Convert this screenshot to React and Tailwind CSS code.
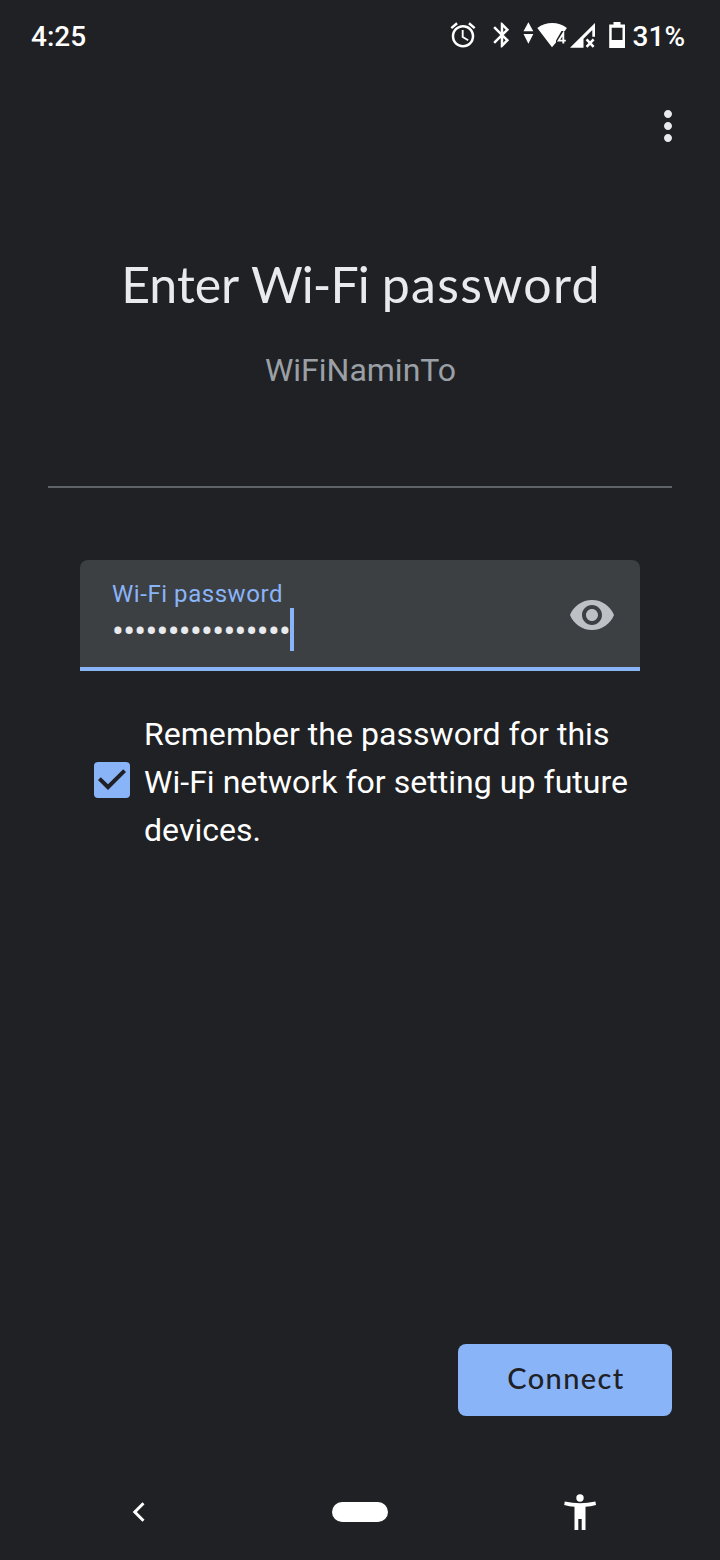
import { useState } from 'react';
import { MdAlarm, MdBluetooth, MdCheckBox, MdMoreVert, MdVisibility } from 'react-icons/md';

const network = {
  ssid: 'WiFiNaminTo',
  maskedPassword: '•'.repeat(16),
};

function NetworkIcons() {
  return (
    <svg width="104" height="30" viewBox="522 21 104 30" fill="currentColor" className="ml-[5px] shrink-0">
      <path d="M528.4 22.3l4.9 9h-9.8zM528.4 43.7l4.9-9.7h-9.8z" />
      <path d="M537.3 28C546 21.4 558.5 21.4 566.9 28L564.8 31H561.5L556 40.5V42.5L552 47.2z" />
      <path d="M563.3 43.5V33.3L558.7 40.6H565.8" fill="none" stroke="currentColor" strokeWidth="1.9" />
      <path fillRule="evenodd" d="M570 47.7L595 23V36.8H592.3V30L583.5 38.7V47.7z" />
      <path d="M586.6 39.3l7 7.5M593.6 39.3l-7 7.5" stroke="currentColor" strokeWidth="2.5" />
      <path fillRule="evenodd" d="M613.5 22h7v2.5H625V48h-15.8V24.5H613.5zM611.7 27.7V40h10.8V27.7z" />
    </svg>
  );
}

function StatusBar() {
  return (
    <header className="flex h-[72px] items-center justify-between pl-[31px] pr-[35px] text-[28px] font-medium leading-8 text-white">
      <span className="pt-0.5">4:25</span>
      <div className="flex items-center">
        <MdAlarm className="mb-0.5 h-[30px] w-[30px]" />
        <MdBluetooth className="mb-0.5 ml-[9px] h-[30px] w-[30px]" />
        <NetworkIcons />
        <span className="ml-[7px] pt-0.5">31%</span>
      </div>
    </header>
  );
}

function PasswordField() {
  return (
    <div className="mx-8 flex h-[111px] items-center justify-between rounded-t-lg border-b-4 border-[#8ab4f8] bg-[#3c4043] pl-8 pr-6">
      <div className="flex h-full flex-col pt-[18px]">
        <span className="text-2xl leading-8 tracking-[0.55px] text-[#8ab4f8]">Wi-Fi password</span>
        <div className="-mt-0.5 flex h-[43px] items-center">
          <span className="w-[178px] whitespace-nowrap pt-1 text-[35px] leading-[43px] tracking-[-0.67px] text-[#e8eaed]">
            {network.maskedPassword}
          </span>
          <span className="h-[43px] w-1 bg-[#8ab4f8]" />
        </div>
      </div>
      <button type="button" aria-label="Show password" className="pt-0.5">
        <MdVisibility className="h-12 w-12 text-[#bdc1c6]" />
      </button>
    </div>
  );
}

function NavigationBar() {
  return (
    <nav className="flex h-24 items-center justify-between px-[120px] text-white">
      <svg width="40" height="40" viewBox="0 0 40 40" fill="none" stroke="currentColor" strokeWidth="3">
        <path d="M23.5 11.3L14.8 20l8.7 8.7" />
      </svg>
      <span className="h-5 w-14 rounded-full bg-white" />
      <svg width="40" height="40" viewBox="560 1492 40 40" fill="currentColor">
        <circle cx="580" cy="1498" r="3.7" />
        <path d="M564.8 1501.5Q580 1505 595.4 1501.5L596 1504.9Q590.5 1506.3 585.5 1506.8V1530H581.7V1519H578.3V1530H574.5V1506.8Q569.5 1506.3 564.2 1504.9z" />
      </svg>
    </nav>
  );
}

export default function App() {
  const [remember, setRemember] = useState(true);

  return (
    <div className="flex h-[1560px] w-[720px] flex-col bg-[#202124] font-['Roboto',sans-serif]">
      <StatusBar />

      <div className="flex h-[108px] items-center justify-end pr-7">
        <button type="button" aria-label="More options" className="text-[#e8eaed]">
          <MdMoreVert className="h-12 w-12" />
        </button>
      </div>

      <main className="flex flex-1 flex-col px-12">
        <h1 className="mt-[72px] whitespace-nowrap pl-0.5 text-center font-['Lato',sans-serif] text-[50px] leading-[64px] text-[#e8eaed]">
          Enter <span className="tracking-[-0.9px]">Wi-Fi</span> <span className="tracking-[1.3px]">password</span>
        </h1>
        <p className="mt-[33px] pl-px text-center text-[32px] leading-[42px] text-[#9aa0a6]">{network.ssid}</p>
        <hr className="mb-[72px] mt-[95px] border-t-2 border-[#5f6368]" />

        <PasswordField />

        <div className="ml-10 mt-[39px] flex items-center">
          <button
            type="button"
            role="checkbox"
            aria-checked={remember}
            aria-label="Remember password"
            onClick={() => setRemember(!remember)}
            className="pb-1"
          >
            <MdCheckBox className={remember ? 'h-12 w-12 text-[#8ab4f8]' : 'h-12 w-12 text-[#5f6368]'} />
          </button>
          <p className="ml-2 w-[500px] text-[32px] leading-[48px] tracking-[0.04px] text-white">
            Remember the password for this Wi-Fi network for setting up future devices.
          </p>
        </div>

        <button
          type="button"
          className="mb-12 ml-auto mt-auto h-[72px] w-[214px] rounded-lg bg-[#8ab4f8] pb-1 pl-0.5 font-['Lato',sans-serif] text-[29px] font-medium tracking-[1.4px] text-[#202124]"
        >
          Connect
        </button>
      </main>

      <NavigationBar />
    </div>
  );
}
